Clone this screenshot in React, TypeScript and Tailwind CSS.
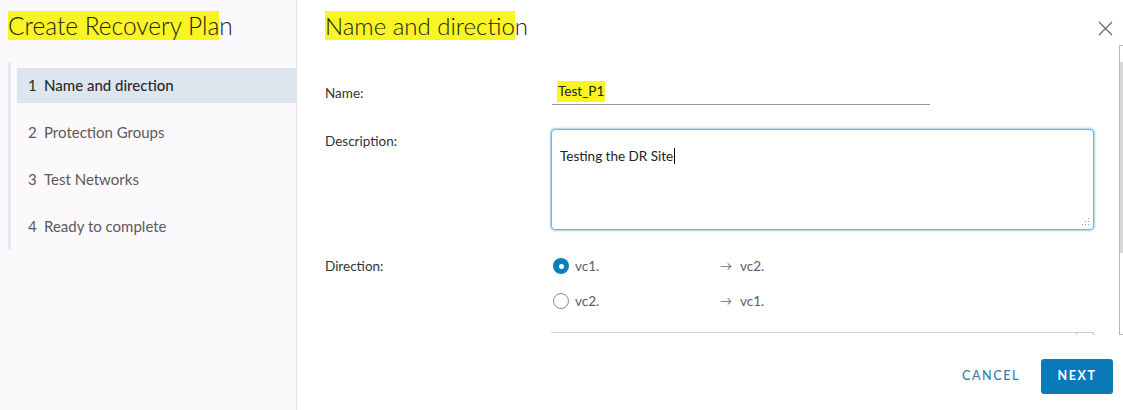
const steps = [
  { n: 1, label: "Name and direction", active: true },
  { n: 2, label: "Protection Groups" },
  { n: 3, label: "Test Networks" },
  { n: 4, label: "Ready to complete" },
];

function cn(...classes: Array<string | false | null | undefined>) {
  return classes.filter(Boolean).join(" ");
}

function Radio(props: { checked?: boolean; from: string; to: string }) {
  return (
    <div className="flex items-center h-[20px]">
      {props.checked ? (
        <span className="w-[16px] h-[16px] rounded-full bg-[#0a7fc0] flex items-center justify-center shrink-0">
          <span className="w-[5px] h-[5px] rounded-full bg-white" />
        </span>
      ) : (
        <span className="w-[16px] h-[16px] rounded-full border border-[#8c8c8c] bg-white shrink-0" />
      )}
      <span className="ml-[6px] w-[145px] shrink-0 whitespace-nowrap">{props.from}</span>
      <span className="text-[#6a6a6a] text-[12px]">→</span>
      <span className="ml-[8px] whitespace-nowrap">{props.to}</span>
    </div>
  );
}

export default function App() {
  return (
    <div
      className="w-[1123px] h-[410px] flex bg-white text-[#313131] overflow-hidden"
      style={{ fontFamily: "Lato, 'Noto Sans', sans-serif" }}
    >
      <aside className="w-[297px] shrink-0 bg-[#fbf9fc] border-r border-[#e6e4e8] flex flex-col">
        <h1 className="pl-[8px] pt-[12px] h-[50px] text-[24.5px] leading-[28px] font-light text-[#222] whitespace-nowrap">
          <span className="bg-[#f9f522]">Create Recovery Pla</span>n
        </h1>
        <nav className="mt-[12px] ml-[8px] border-l-[3px] border-[#e9e7ec] pl-[6px] py-[6px] flex flex-col gap-[12px]">
          {steps.map((s) => (
            <div
              key={s.n}
              className={cn(
                "h-[35px] flex items-center pl-[11px] text-[15px] whitespace-nowrap",
                s.active ? "bg-[#dde6ee] text-[#2a2a2a]" : "text-[#5a5a5a]"
              )}
            >
              <span className="w-[16px]">{s.n}</span>
              <span className={s.active ? "font-medium" : ""}>{s.label}</span>
            </div>
          ))}
        </nav>
      </aside>

      <main className="flex-1 flex flex-col min-w-0">
        <header className="h-[45px] flex items-start justify-between pl-[28px] pr-[10px] pt-[12px]">
          <h2 className="text-[24px] leading-[28px] font-light text-[#222] whitespace-nowrap">
            <span className="bg-[#f9f522]">Name and directio</span>n
          </h2>
          <svg className="mt-[9px]" width="15" height="15" viewBox="0 0 15 15">
            <path d="M1 1 L14 14 M14 1 L1 14" stroke="#6b6b6b" strokeWidth="1.3" fill="none" />
          </svg>
        </header>

        <div className="h-[290px] flex overflow-hidden">
          <div className="flex-1 pl-[28px] pt-[36px] text-[13.5px]">
            <div className="flex items-center">
              <label className="w-[227px] text-[#333]">Name:</label>
              <div className="w-[378px] h-[24px] border-b border-[#9a9a9a] flex items-center pl-[5px] pb-[2px]">
                <span className="bg-[#f9f522] px-[1px] text-[#222]">Test_P1</span>
              </div>
            </div>

            <div className="flex mt-[24px]">
              <label className="w-[226px] mt-[2px] text-[#333]">Description:</label>
              <div className="relative w-[543px] h-[101px] rounded-[4px] border border-[#6db8dc] shadow-[0_0_2px_1px_rgba(120,190,225,0.7)] bg-white pl-[8px] pt-[16px]">
                <span className="border-r border-black pr-[1px] text-[#222]">Testing the DR Site</span>
                <svg className="absolute right-[3px] bottom-[3px]" width="8" height="8" viewBox="0 0 8 8">
                  <g fill="#9a9a9a">
                    <rect x="6" y="0" width="1" height="1" />
                    <rect x="3" y="3" width="1" height="1" />
                    <rect x="6" y="3" width="1" height="1" />
                    <rect x="0" y="6" width="1" height="1" />
                    <rect x="3" y="6" width="1" height="1" />
                    <rect x="6" y="6" width="1" height="1" />
                  </g>
                </svg>
              </div>
            </div>

            <div className="flex mt-[26px]">
              <label className="w-[227px] leading-[20px] text-[#333]">Direction:</label>
              <div className="flex flex-col gap-[15px] pl-[1px] text-[#5e5e5e]">
                <Radio checked from="vc1." to="vc2." />
                <Radio from="vc2." to="vc1." />
              </div>
            </div>

            <div className="mt-[21px] ml-[226px] w-[543px] flex items-start">
              <div className="flex-1 border-t border-[#d6d6d6]" />
              <div className="w-[18px] h-[6px] border border-[#c8c8c8] border-b-0" />
            </div>
          </div>
          <div className="w-[26px] shrink-0 flex justify-end">
            <div className="w-[4px] border-l border-t border-b border-[#b8b8b8] pt-[16px]">
              <div className="h-[191px] bg-[#d8d8d8]" />
            </div>
          </div>
        </div>

        <footer className="flex-1 flex items-start justify-end pt-[24px] pr-[10px] gap-[9px]">
          <button
            type="button"
            className="h-[35px] px-[12px] text-[12.5px] tracking-[1.6px] text-[#2f7fb0] font-medium"
          >
            CANCEL
          </button>
          <button
            type="button"
            className="h-[35px] w-[72px] rounded-[3px] bg-[#0a79b9] text-white text-[12.5px] tracking-[1.6px] font-bold"
          >
            NEXT
          </button>
        </footer>
      </main>
    </div>
  );
}
